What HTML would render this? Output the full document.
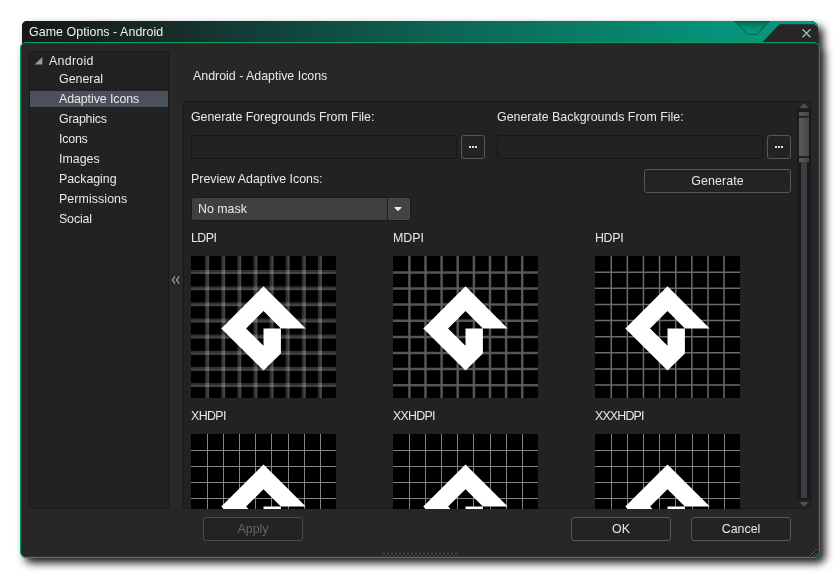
<!DOCTYPE html>
<html lang="en">
<head>
<meta charset="utf-8">
<title>Game Options - Android</title>
<style>
  html, body { margin: 0; padding: 0; }
  body {
    width: 840px; height: 578px; background: #ffffff; position: relative; overflow: hidden;
    font-family: "Liberation Sans", "DejaVu Sans", sans-serif; font-size: 12.4px; color: #e8e8e8;
  }
  .abs { position: absolute; }
  .t { position: absolute; white-space: nowrap; line-height: 16px; height: 16px; will-change: transform; }

  /* window */
  #shadowwrap { left: 0; top: 0; width: 840px; height: 578px; filter: drop-shadow(5.5px 5.5px 4.4px rgba(0,0,0,0.9)); }
  #titleshadow { left: 22px; top: 21px; width: 796px; height: 30px; border-radius: 5px 7px 0 0; background: #141918; }
  #win { left: 20px; top: 42px; width: 798px; height: 514px; background: #272727;
    border: 1px solid #0b9c62; border-radius: 6px; box-shadow: inset 0 0 0 1px #352e30; }
  #title { left: 22px; top: 21px; width: 796px; height: 21px; border-radius: 5px 7px 0 0; overflow: hidden;
    background: linear-gradient(90deg, #151919 0px, #171f1e 60px, #182b28 140px, #10483e 280px, #0d6454 420px, #097f69 580px, #06937a 700px, #04997d 796px); }
  #title .tt { left: 7px; top: 3px; color: #f0f0f0; }

  /* panels */
  #tree { left: 29px; top: 51px; width: 138px; height: 456px; background: #222222; border: 1px solid #191919; border-radius: 3px; }
  #content { left: 183px; top: 101px; width: 626px; height: 406px; background: #222222;
    border: 1px solid #191919; border-radius: 3px; overflow: hidden; }
  .sel { left: 30px; top: 91px; width: 138px; height: 16px; background: #4a505c; }

  .input { height: 22px; background: #222222; border: 1px solid #171717; border-radius: 2px; }
  .btn { border: 1px solid #575757; border-radius: 3px; background: #232323; box-sizing: border-box; }
  .btn .t { left: 0; right: 0; text-align: center; }


  #tr0 { letter-spacing: 0.3px; } #tr2 { letter-spacing: -0.08px; } #tr3 { letter-spacing: -0.24px; }
  #tr4 { letter-spacing: -0.2px; } #tr6 { letter-spacing: -0.04px; } #tr7 { letter-spacing: 0.08px; } #tr8 { letter-spacing: -0.14px; }
  #l1 { letter-spacing: -0.04px; } #b_gen { letter-spacing: 0.1px; } #t_title { letter-spacing: 0.06px; }
  #i1 { letter-spacing: -0.57px; } #i3 { letter-spacing: -0.33px; } #i4 { letter-spacing: -0.6px; }
  #i5 { letter-spacing: -0.74px; } #i6 { letter-spacing: -0.83px; }
  .icon { width: 145px; height: 142px; overflow: hidden; background: #000; }
  .icon svg { display: block; }
</style>
</head>
<body>

<div class="abs" id="shadowwrap">
  <div class="abs" id="titleshadow"></div>
  <div class="abs" id="win"></div>
</div>

<!-- title bar -->
<div class="abs" id="title">
  <div class="t tt" id="t_title">Game Options - Android</div>
  <svg class="abs" style="left:700px;top:0" width="96" height="21" viewBox="0 0 96 21">
    <defs>
      <linearGradient id="tg" x1="0" y1="0" x2="0" y2="1">
        <stop offset="0" stop-color="#016a53"/><stop offset="0.5" stop-color="#038a6e"/><stop offset="1" stop-color="#05a284"/>
      </linearGradient>
    </defs>
    <polygon points="12.3,0 47.7,0 35,13.3 25.8,13.3" fill="url(#tg)" stroke="#015843" stroke-width="0.9"/>
    <polygon points="57.3,3.2 92,3.2 96,6.5 96,21 40.7,21" fill="#262626"/>
    <path d="M80.5,8.2 L88.5,16.2 M88.5,8.2 L80.5,16.2" stroke="#adb5c2" stroke-width="1.3" fill="none"/>
  </svg>
</div>

<!-- tree -->
<div class="abs" id="tree"></div>
<div class="abs sel"></div>
<svg class="abs" style="left:34px;top:56px" width="10" height="10" viewBox="0 0 10 10"><polygon points="8.3,1 8.3,8.6 0.7,8.6" fill="#9c9c9c"/></svg>
<div class="t" id="tr0" style="left:49px;top:53px">Android</div>
<div class="t" id="tr1" style="left:59px;top:71px">General</div>
<div class="t" id="tr2" style="left:59px;top:91px">Adaptive Icons</div>
<div class="t" id="tr3" style="left:59px;top:111px">Graphics</div>
<div class="t" id="tr4" style="left:59px;top:131px">Icons</div>
<div class="t" id="tr5" style="left:59px;top:151px">Images</div>
<div class="t" id="tr6" style="left:59px;top:171px">Packaging</div>
<div class="t" id="tr7" style="left:59px;top:191px">Permissions</div>
<div class="t" id="tr8" style="left:59px;top:211px">Social</div>

<!-- collapse chevrons -->
<svg class="abs" style="left:170px;top:274px" width="12" height="12" viewBox="0 0 12 12">
  <path d="M5,2.3 L2.4,6 L5,9.7 M9.2,2.3 L6.6,6 L9.2,9.7" stroke="#9a9a9a" stroke-width="1.3" fill="none"/>
</svg>

<!-- heading -->
<div class="t" id="h1" style="left:193px;top:68px">Android - Adaptive Icons</div>

<!-- content panel -->
<div class="abs" id="content"></div>

<div class="t" id="l1" style="left:191px;top:109px">Generate Foregrounds From File:</div>
<div class="t" id="l2" style="left:497px;top:109px">Generate Backgrounds From File:</div>
<div class="abs input" style="left:191px;top:135px;width:264px"></div>
<div class="abs btn" style="left:461px;top:135px;width:24px;height:24px">
  <svg class="abs" style="left:7px;top:10px" width="9" height="3" viewBox="0 0 9 3"><rect x="0" y="0" width="2" height="2" fill="#dedede"/><rect x="3" y="0" width="2" height="2" fill="#dedede"/><rect x="6" y="0" width="2" height="2" fill="#dedede"/></svg>
</div>
<div class="abs input" style="left:497px;top:135px;width:264px"></div>
<div class="abs btn" style="left:767px;top:135px;width:24px;height:24px">
  <svg class="abs" style="left:7px;top:10px" width="9" height="3" viewBox="0 0 9 3"><rect x="0" y="0" width="2" height="2" fill="#dedede"/><rect x="3" y="0" width="2" height="2" fill="#dedede"/><rect x="6" y="0" width="2" height="2" fill="#dedede"/></svg>
</div>

<div class="t" id="l3" style="left:191px;top:171px">Preview Adaptive Icons:</div>
<div class="abs btn" style="left:644px;top:169px;width:147px;height:24px"><div class="t" id="b_gen" style="top:3px">Generate</div></div>

<!-- dropdown -->
<div class="abs" style="left:191px;top:197px;width:218px;height:22px;background:#404040;border:1px solid #191919;border-radius:3px"></div>
<div class="abs" style="left:387px;top:198px;width:1px;height:22px;background:#1b1b1b"></div>
<div class="abs" style="left:388px;top:198px;width:20px;height:20px;background:#424242;border:1px solid #494949;border-radius:3px"></div>
<svg class="abs" style="left:392.8px;top:205.6px" width="10" height="6" viewBox="0 0 10 6"><path d="M1.75,1.5 L8.25,1.5 L5,4.6 Z" fill="#eaf2ee" stroke="#eaf2ee" stroke-width="1" stroke-linejoin="round"/></svg>
<div class="t" id="dd" style="left:198px;top:201px">No mask</div>

<!-- icon labels row 1 -->
<div class="t" id="i1" style="left:191px;top:230px">LDPI</div>
<div class="t" id="i2" style="left:393px;top:230px">MDPI</div>
<div class="t" id="i3" style="left:595px;top:230px">HDPI</div>

<svg width="0" height="0" style="position:absolute">
  <defs>
    <path id="logo" d="M30.3,72.4 L72.5,30.2 L114.7,72.4 L89.9,72.4 L72.5,55 L55.1,72.4 L72.5,89.8 L72.5,72.4 L89.9,72.4 L89.9,97.4 L72.5,114.6 Z" fill="#ffffff"/>
    <g id="gridlines">
      <path d="M16.1,-3V148 M32.2,-3V148 M48.3,-3V148 M64.4,-3V148 M80.6,-3V148 M96.7,-3V148 M112.8,-3V148 M128.9,-3V148"/>
      <path d="M-3,16.1H148 M-3,32.2H148 M-3,48.3H148 M-3,64.4H148 M-3,80.6H148 M-3,96.7H148 M-3,112.8H148 M-3,128.9H148"/>
    </g>
    <path id="gridone" d="M16.1,-3V148 M32.2,-3V148 M48.3,-3V148 M64.4,-3V148 M80.6,-3V148 M96.7,-3V148 M112.8,-3V148 M128.9,-3V148 M-3,16.1H148 M-3,32.2H148 M-3,48.3H148 M-3,64.4H148 M-3,80.6H148 M-3,96.7H148 M-3,112.8H148 M-3,128.9H148"/>
    <path id="gridsnap" d="M16.5,-3V148 M32.5,-3V148 M48.5,-3V148 M64.5,-3V148 M80.5,-3V148 M97.5,-3V148 M113.5,-3V148 M129.5,-3V148 M-3,16.5H148 M-3,32.5H148 M-3,48.5H148 M-3,64.5H148 M-3,80.5H148 M-3,97.5H148 M-3,113.5H148 M-3,129.5H148"/>
  </defs>
</svg>

<div class="abs icon" style="left:191px;top:256px">
  <svg width="145" height="145" viewBox="0 0 145 145">
    <g fill="none" stroke="#ffffff" stroke-opacity="0.18" stroke-width="4"><use href="#gridlines"/></g>
    <g fill="none" stroke="#ffffff" stroke-opacity="0.11" stroke-width="2"><use href="#gridlines" x="1" y="1"/></g>
    <use href="#logo"/>
  </svg>
</div>
<div class="abs icon" style="left:393px;top:256px">
  <svg width="145" height="145" viewBox="0 0 145 145">
    <g fill="none" stroke="#4c4c4c" stroke-width="2.5"><use href="#gridone" x="0.3" y="0.3"/></g>
    <g fill="none" stroke="#ffffff" stroke-opacity="0.05" stroke-width="2.5"><use href="#gridlines" x="0.3" y="0.3"/></g>
    <use href="#logo"/>
  </svg>
</div>
<div class="abs icon" style="left:595px;top:256px">
  <svg width="145" height="145" viewBox="0 0 145 145">
    <g fill="none" stroke="#6c6c6c" stroke-width="1.5"><use href="#gridone" x="0.15" y="0.15"/></g>
    <use href="#logo"/>
  </svg>
</div>

<!-- icon labels row 2 -->
<div class="t" id="i4" style="left:191px;top:408px">XHDPI</div>
<div class="t" id="i5" style="left:393px;top:408px">XXHDPI</div>
<div class="t" id="i6" style="left:595px;top:408px">XXXHDPI</div>

<div class="abs icon" style="left:191px;top:434px;height:75px">
  <svg width="145" height="145" viewBox="0 0 145 145">
    <g fill="none" stroke="#858585" stroke-width="1" shape-rendering="crispEdges"><use href="#gridsnap"/></g>
    <use href="#logo" y="0.2"/>
  </svg>
</div>
<div class="abs icon" style="left:393px;top:434px;height:75px">
  <svg width="145" height="145" viewBox="0 0 145 145">
    <g fill="none" stroke="#828282" stroke-width="1" shape-rendering="crispEdges"><use href="#gridsnap"/></g>
    <use href="#logo" y="0.2"/>
  </svg>
</div>
<div class="abs icon" style="left:595px;top:434px;height:75px">
  <svg width="145" height="145" viewBox="0 0 145 145">
    <g fill="none" stroke="#808080" stroke-width="1" shape-rendering="crispEdges"><use href="#gridsnap"/></g>
    <use href="#logo" y="0.2"/>
  </svg>
</div>

<!-- scrollbar -->
<div class="abs" style="left:797px;top:102px;width:13px;height:406px;background:#1b1b1b"></div>
<div class="abs" style="left:798px;top:102px;width:12px;height:7px;background:#242424"></div>
<div class="abs" style="left:798px;top:500px;width:12px;height:8px;background:#242424"></div>
<div class="abs" style="left:801px;top:162px;width:6px;height:336px;background:linear-gradient(90deg,#363a3f 0,#3c4046 50%,#373b40 100%)"></div>
<svg class="abs" style="left:798px;top:102px" width="12" height="7" viewBox="0 0 12 7"><polygon points="5.9,0.9 10.3,6 1.7,6" fill="#505050"/></svg>
<svg class="abs" style="left:798px;top:501px" width="12" height="7" viewBox="0 0 12 7"><polygon points="1.7,0.9 10.3,0.9 5.9,6" fill="#505050"/></svg>
<div class="abs" style="left:799px;top:112px;width:10px;height:50px;background:linear-gradient(90deg,#5a5a5a 0,#505050 50%,#454545 100%)"></div>
<div class="abs" style="left:799px;top:116px;width:10px;height:2px;background:linear-gradient(180deg,#1e1e1e 0,#1e1e1e 50%,#3a3a3a 100%)"></div>
<div class="abs" style="left:799px;top:156px;width:10px;height:2px;background:#202020"></div>

<!-- bottom buttons -->
<div class="abs btn" style="left:203px;top:517px;width:100px;height:24px;border-color:#4a4a4a"><div class="t" id="b_apply" style="top:3px;color:#656565">Apply</div></div>
<div class="abs btn" style="left:571px;top:517px;width:100px;height:24px"><div class="t" id="b_ok" style="top:3px">OK</div></div>
<div class="abs btn" style="left:691px;top:517px;width:100px;height:24px"><div class="t" id="b_cancel" style="top:3px">Cancel</div></div>

<!-- bottom grip dots -->
<div class="abs" style="left:381px;top:553px;width:78px;height:1px;background-image:repeating-linear-gradient(90deg,transparent 0,transparent 2px,#4c4c4c 2px,#4c4c4c 4px)"></div>
<div class="abs" style="left:381px;top:554px;width:78px;height:1px;background-image:repeating-linear-gradient(90deg,#161616 0,#161616 2px,#3c3c3c 2px,#3c3c3c 4px)"></div>
<div class="abs" style="left:381px;top:555px;width:78px;height:1px;background-image:repeating-linear-gradient(90deg,#4a4a4a 0,#4a4a4a 2px,#1f1f1f 2px,#1f1f1f 4px)"></div>
<!-- resize grip -->
<svg class="abs" style="left:808px;top:548px" width="10" height="9" viewBox="0 0 10 9" shape-rendering="crispEdges">
  <g fill="#484848"><rect x="7" y="1" width="2" height="2"/><rect x="5" y="3" width="2" height="2"/><rect x="3" y="5" width="2" height="2"/><rect x="1" y="7" width="2" height="1"/><rect x="7" y="5" width="2" height="2"/><rect x="5" y="7" width="2" height="1"/></g>
  <g fill="#171717"><rect x="7" y="3" width="2" height="2"/><rect x="5" y="5" width="2" height="2"/><rect x="3" y="7" width="2" height="1"/></g>
</svg>

</body>
</html>
